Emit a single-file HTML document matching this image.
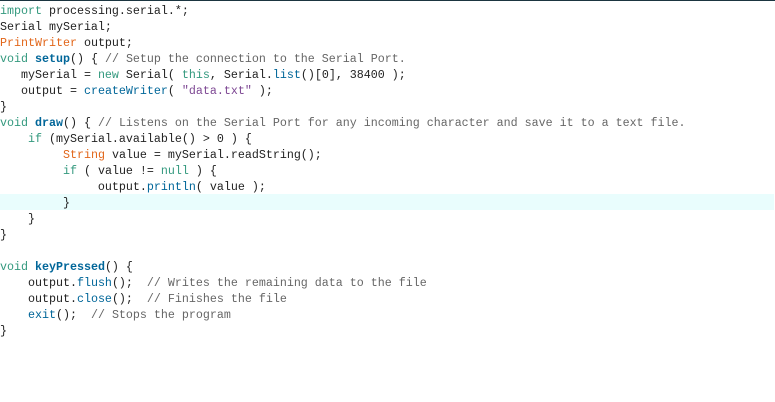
<!DOCTYPE html>
<html><head><meta charset="utf-8"><style>
body{margin:0;background:#fff;width:775px;height:402px;overflow:hidden;position:relative}
.top{position:absolute;left:0;top:0;width:775px;height:1px;background:#1b3540}
.hl{position:absolute;left:0;top:194px;width:774px;height:16px;background:#e9fdfd}
pre{position:absolute;left:0;top:3px;margin:0;font-family:"Liberation Mono","DejaVu Sans Mono",monospace;font-size:11.67px;line-height:16px;color:#222}
.k{color:#33997e}.t{color:#e2661a}.f{color:#006699}.b{color:#006699;font-weight:bold}.s{color:#7d4793}.c{color:#666}
</style></head><body><div class="top"></div><div class="hl"></div>
<pre><span class="k">import</span> processing.serial.*;
Serial mySerial;
<span class="t">PrintWriter</span> output;
<span class="k">void</span> <span class="b">setup</span>() { <span class="c">// Setup the connection to the Serial Port.</span>
   mySerial = <span class="k">new</span> Serial( <span class="k">this</span>, Serial.<span class="f">list</span>()[0], 38400 );
   output = <span class="f">createWriter</span>( <span class="s">"data.txt"</span> );
}
<span class="k">void</span> <span class="b">draw</span>() { <span class="c">// Listens on the Serial Port for any incoming character and save it to a text file.</span>
    <span class="k">if</span> (mySerial.available() &gt; 0 ) {
         <span class="t">String</span> value = mySerial.readString();
         <span class="k">if</span> ( value != <span class="k">null</span> ) {
              output.<span class="f">println</span>( value );
         }
    }
}

<span class="k">void</span> <span class="b">keyPressed</span>() {
    output.<span class="f">flush</span>();  <span class="c">// Writes the remaining data to the file</span>
    output.<span class="f">close</span>();  <span class="c">// Finishes the file</span>
    <span class="f">exit</span>();  <span class="c">// Stops the program</span>
}</pre>
</body></html>
